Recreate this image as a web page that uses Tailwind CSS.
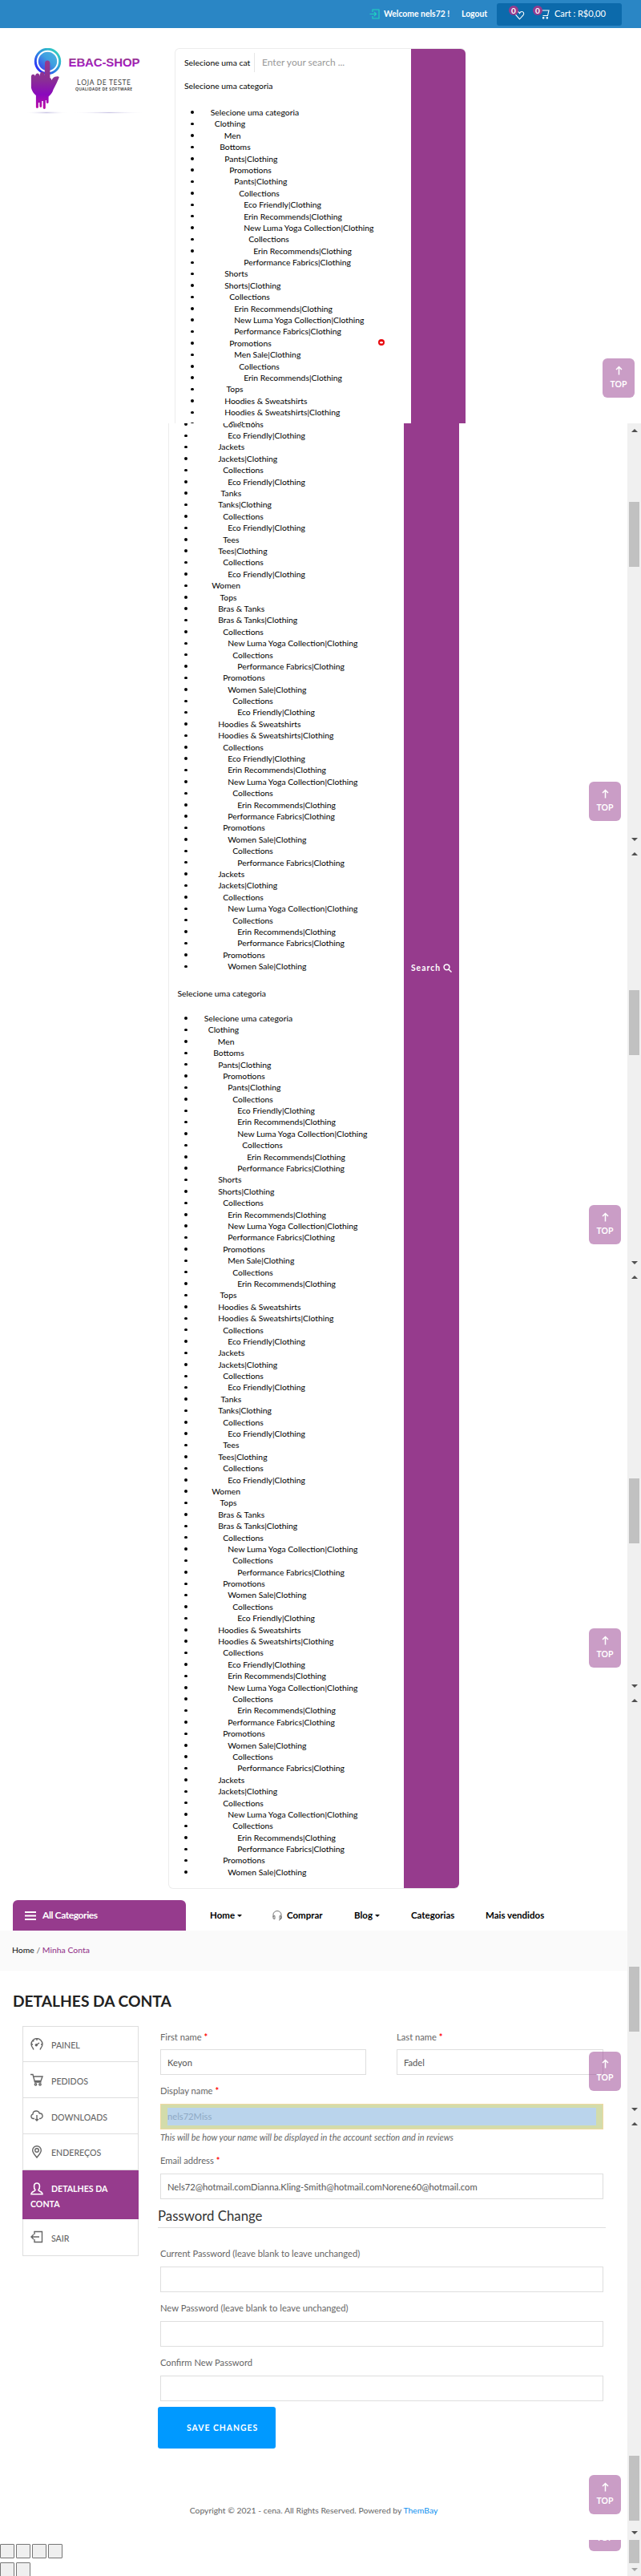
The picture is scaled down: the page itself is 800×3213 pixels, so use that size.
<!DOCTYPE html>
<html lang="pt-BR">
<head>
<meta charset="utf-8">
<title>Minha Conta – EBAC-SHOP</title>
<script src="https://cdn.jsdelivr.net/npm/@tailwindcss/browser@4"></script>
</head>
<body class="w-[800px] h-[3213px] overflow-hidden bg-white font-['Lato',sans-serif] text-[12px] text-[#666]">

<svg width="0" height="0" class="absolute">
  <defs>
    <linearGradient id="ring" x1="0" y1="1" x2="1" y2="0"><stop offset="0" stop-color="#2a10ff"/><stop offset=".5" stop-color="#2f8fe0"/><stop offset="1" stop-color="#35e0b8"/></linearGradient>
    <linearGradient id="disc" x1="0" y1="1" x2="1" y2="0"><stop offset="0" stop-color="#3535ee"/><stop offset=".55" stop-color="#3f9fe0"/><stop offset="1" stop-color="#4cb4e0"/></linearGradient>
    <linearGradient id="hand" x1="0" y1="0" x2="0" y2="1"><stop offset="0" stop-color="#963b8d"/><stop offset=".4" stop-color="#8a2f95"/><stop offset=".7" stop-color="#8a08bd"/><stop offset="1" stop-color="#c010a5"/></linearGradient>
    <linearGradient id="word" x1="0" y1="0" x2="0" y2="1"><stop offset=".2" stop-color="#963b8d"/><stop offset=".8" stop-color="#a314c4"/></linearGradient>
    <radialGradient id="shade"><stop offset="0" stop-color="#c9c4e4"/><stop offset="1" stop-color="#fff" stop-opacity="0"/></radialGradient>
  </defs>
</svg>

<!-- first viewport -->
<div class="relative h-[528px] overflow-hidden">
  <header class="flex h-[35px] items-center bg-[#2a86c5] pl-[461px] text-white">
    <svg class="h-[13px] w-[13px]" viewBox="0 0 13 13" fill="none" stroke="#1fd6c0" stroke-width="1.1"><path d="M4 4V1h8v11H4V9M0.5 6.5H8M6 4l2.5 2.5L6 9"/></svg>
    <span class="ml-[5px] w-[97px] whitespace-nowrap text-[10.4px] font-bold">Welcome nels72 !</span>
    <span class="w-[44px] text-[10.4px] font-bold">Logout</span>
    <div class="relative flex h-[28px] w-[156px] items-center rounded-[3px] bg-[#0c6aab] pl-[22px]">
      <svg class="mt-[2px] h-[12px] w-[13px]" viewBox="0 0 13 12" fill="none" stroke="#fff" stroke-width="1.1"><path d="M6.5 10.8L2 6C.5 4 1.500 1.500 3.800 1.500c1.300 0 2.200.8 2.700 1.900C7 2.300 7.900 1.500 9.200 1.500c2.300 0 3.300 2.500 1.800 4.500z"/></svg>
      <svg class="ml-[20px] h-[12px] w-[11px]" viewBox="0 0 11 12" fill="none" stroke="#fff" stroke-width="1.100"><path d="M0 1h10L8.500 7.500H2.500M10 1L9.300 4"/><circle cx="3.200" cy="10.300" r=".8"/><circle cx="7.800" cy="10.300" r=".8"/></svg>
      <span class="ml-[6px] whitespace-nowrap text-[11.2px] tracking-[-.1px]">Cart : R$0,00</span>
      <span class="absolute left-[15px] top-[3px] flex h-[12px] w-[12px] items-center justify-center rounded-full bg-[#963b8d] text-[10px] font-bold leading-none">0</span>
      <span class="absolute left-[45px] top-[3px] flex h-[12px] w-[12px] items-center justify-center rounded-full bg-[#963b8d] text-[10px] font-bold leading-none">0</span>
    </div>
  </header>

  <div class="flex pt-[25px]">
    <svg class="h-[90px] w-[218px] shrink-0" viewBox="0 60 218 90">
      <ellipse cx="58" cy="140.500" rx="27" ry="2" fill="url(#shade)"/>
      <ellipse cx="136" cy="140.500" rx="46" ry="1.500" fill="url(#shade)"/>
      <circle cx="59.500" cy="76.500" r="15.200" fill="none" stroke="url(#ring)" stroke-width="3"/>
      <circle cx="59.500" cy="76.500" r="11.700" fill="url(#disc)"/>
      <path fill="url(#hand)" d="M56 79q0-3.500 3.200-3.500T62.400 79V97q1.600.5 2 3 1.800-4.500 6-4.600 3.200-.3 3.400 1.200-3.200 8-7.400 15.400-1 4.500-5.800 8.400V128q-1.400 2-2.800 0v-3h-1v10q-1.500 2.200-3 0v-9h-1.600v7q-1.400 1.800-2.800 0v-5h-1.500v6q-1.600 2-3 0V119q-4.600-3.600-6-9.500V95q.6-2.500 2.800-2.200 2 .2 2.200 2.200.5-3.500 3-3.500 2.200 0 2.600 3.500.4-5.500 3.200-5.500 2.600 0 3 4.500z"/>
      <text x="85.500" y="82.700" font-family="Liberation Sans, sans-serif" font-weight="700" font-size="15" textLength="89" fill="url(#word)">EBAC-SHOP</text>
      <text x="96" y="106.300" font-family="Open Sans, sans-serif" font-size="9" textLength="67" fill="#333">LOJA DE TESTE</text>
      <text x="94" y="113" font-family="Open Sans, sans-serif" font-weight="600" font-size="5" textLength="71" fill="#222">QUALIDADE DE SOFTWARE</text>
    </svg>
    <div class="flex h-[500px] w-[363px] rounded-t-[6px] border border-b-0 border-[#ececec] text-black">
      <div class="w-[294px] shrink-0 text-[10.4px]">
        <div class="flex h-[35px] items-center">
          <span class="ml-[11px] w-[83px] whitespace-nowrap">Selecione uma cat</span>
          <span class="ml-[4px] mt-[-1px] flex h-[24px] items-center border-l border-[#e5e5e5] pl-[9px] text-[12px] text-[#999]">Enter your search ...</span>
        </div>
        <div class="ml-[11px] mt-[2px] h-[35px] leading-[18px]">Selecione uma categoria</div>
        <ul id="a" class="leading-[14.400px]"></ul>
      </div>
      <div class="-mr-px flex-1 rounded-tr-[6px] bg-[#963b8d]"></div>
    </div>
  </div>

  <svg class="absolute left-[471px] top-[422px] h-[10px] w-[10px]" viewBox="0 0 10 10"><circle cx="5" cy="5" r="4" fill="#e8090f"/><ellipse cx="5" cy="5.200" rx="2" ry="1.300" fill="#fff"/></svg>
  <div class="absolute left-[752px] top-[447px]" data-top></div>
</div>

<div class="flex">
  <!-- scrolled page -->
  <div class="h-[2685px] w-[783px] shrink-0 overflow-hidden">
    <div class="ml-[210px] flex h-[1828px] w-[363px] rounded-b-[6px] border border-t-0 border-[#ececec] text-[10.4px] text-black">
      <div class="h-[1827px] w-[293px] shrink-0 overflow-hidden">
        <ul id="b" class="mt-[-6.300px] leading-[14.400px]"></ul>
        <div class="ml-[10.500px] flex h-[50.500px] items-center pt-[2px] leading-[14.400px]">Selecione uma categoria</div>
        <ul id="c" class="leading-[14.400px]"></ul>
      </div>
      <div class="-mr-px flex flex-1 items-start justify-center rounded-br-[6px] bg-[#963b8d] pt-[672px] text-white">
        <span class="text-[10.4px] font-bold tracking-[1px]">Search</span>
        <svg class="ml-[3px] mt-[2px] h-[11px] w-[11px]" viewBox="0 0 11 11" fill="none" stroke="#fff" stroke-width="1.500"><circle cx="4.500" cy="4.300" r="3.400"/><path d="M7 7l3.500 3.500"/></svg>
      </div>
    </div>

    <nav class="mt-[14px] flex h-[38px] items-center text-[11.5px] font-medium text-black">
      <div class="ml-[16px] flex h-[38px] w-[216px] items-center rounded-t-[6px] bg-[#963b8d] pl-[15px] font-bold text-white">
        <svg class="mr-[8px] h-[11px] w-[14px]" viewBox="0 0 14 11" fill="#fff"><path d="M0 0h14v2H0zM0 4.500h14v2H0zM0 9h14v2H0z"/></svg>
        <span class="text-[12px] tracking-[-.4px]">All Categories</span>
      </div>
      <div class="ml-[30px] flex w-[78px] items-center font-bold"><span class="w-[34px]">Home</span><i class="border-x-[3px] border-t-[3px] border-x-transparent border-t-black"></i></div>
      <svg class="mr-[6px] h-[13px] w-[12px]" viewBox="0 0 12 13" fill="none" stroke="#666" stroke-width=".9"><path d="M1 8V5a5 4.500 0 0 1 10 0v5l-3 2.300M1 7l2-.5v4L1 10zM11 7l-2-.5v4l2-.5z"/></svg>
      <span class="w-[84px] font-bold">Comprar</span>
      <div class="flex w-[71px] items-center font-bold"><span class="w-[26px]">Blog</span><i class="border-x-[3px] border-t-[3px] border-x-transparent border-t-black"></i></div>
      <span class="w-[93px] font-bold">Categorias</span>
      <span class="font-bold">Mais vendidos</span>
    </nav>
    <div class="flex h-[50px] items-center bg-[#fafafa] pl-[15px] text-[10.4px]"><span class="font-medium text-[#222]">Home</span>&nbsp;/&nbsp;<span class="font-medium text-[#963b8d]">Minha Conta</span></div>
    <h1 class="ml-[16px] mt-[25px] h-[44px] text-[19.2px] font-bold leading-[26px] text-[#222]">DETALHES DA CONTA</h1>

    <div class="flex h-[641px]">
      <ul class="ml-[28px] h-[287px] w-[145px] border border-[#dedede] text-[10.6px] text-[#666]">
        <li class="flex h-[44px] items-center border-b border-[#dedede] pl-[9px]">
          <svg class="h-[16px] w-[16px]" viewBox="0 0 16 16" fill="none" stroke="#666" stroke-width="1.400"><path d="M4 14.500L3 12.500A7 7 0 1 1 13 12.500l-1 2M7 9l4-3M8 1v2M1 8h2M3 3l1.300 1.300M13 8h2"/><circle cx="7.300" cy="8.700" r="1"/></svg>
          <span class="ml-[10px] mt-[5px] font-medium">PAINEL</span></li>
        <li class="flex h-[45px] items-center border-b border-[#dedede] pl-[9px]">
          <svg class="h-[16px] w-[16px]" viewBox="0 0 16 16" fill="none" stroke="#666" stroke-width="1.400"><path d="M0 1.500h3L5.500 11h8M3.500 4H15l-2 5.500H5.500"/><circle cx="6.500" cy="13.800" r="1.200"/><circle cx="12" cy="13.800" r="1.200"/></svg>
          <span class="ml-[10px] mt-[5px] font-medium">PEDIDOS</span></li>
        <li class="flex h-[45px] items-center border-b border-[#dedede] pl-[9px]">
          <svg class="h-[16px] w-[16px]" viewBox="0 0 16 16" fill="none" stroke="#666" stroke-width="1.400"><path d="M5 11.500H3.500A2.800 2.800 0 0 1 3 6C3 3.500 5 2 7.300 2c2 0 3.500 1.200 4 3a3.200 3.200 0 0 1 1 6.500H11M8 7v7M6 12l2 2 2-2"/></svg>
          <span class="ml-[10px] mt-[5px] font-medium">DOWNLOADS</span></li>
        <li class="flex h-[45px] items-center border-b border-[#dedede] pl-[9px]">
          <svg class="h-[16px] w-[16px]" viewBox="0 0 16 16" fill="none" stroke="#666" stroke-width="1.400"><path d="M8 15C6 12 2.700 9.500 2.700 6a5.300 5.300 0 0 1 10.600 0c0 3.500-3.300 6-5.300 9z"/><circle cx="8" cy="6" r="2.300"/></svg>
          <span class="ml-[10px] mt-[4px] font-medium">ENDEREÇOS</span></li>
        <li class="-mx-px h-[61px] bg-[#963b8d] pl-[10px] pt-[13px] font-bold text-white">
          <div class="flex h-[19px] items-center">
          <svg class="h-[16px] w-[16px]" viewBox="0 0 16 16" fill="none" stroke="#fff" stroke-width="1.600"><path d="M6 9.500C4 7.500 3.500 1 8 1s4 6.500 2 8.500c0 2 5 1.500 5 5.300H1c0-3.800 5-3.300 5-5.300z"/></svg>
          <span class="ml-[10px] mt-[2px]">DETALHES DA</span></div>
          <div class="mt-[2px] leading-[16px]">CONTA</div></li>
        <li class="flex h-[44px] items-center pl-[9px]">
          <svg class="h-[16px] w-[16px]" viewBox="0 0 16 16" fill="none" stroke="#666" stroke-width="1.400"><path d="M5 5V1.500h9.500v13H5V11M11 8H1M4 5L1 8l3 3"/></svg>
          <span class="ml-[10px] mt-[5px] font-medium">SAIR</span></li>
      </ul>

      <form class="ml-[27px] w-[553px] pt-[5px] text-[11.2px] leading-[18px] [&_input]:block [&_input]:h-[32px] [&_input]:w-full [&_input]:border [&_input]:border-[#dedede] [&_input]:px-[8px] [&_input]:text-[#555] [&_label]:block [&_b]:text-[#f00]">
        <div class="flex gap-[38px]">
          <div class="w-[257px]"><label class="h-[24px]">First name <b>*</b></label><input value="Keyon"></div>
          <div class="w-[258px]"><label class="h-[24px]">Last name <b>*</b></label><input value="Fadel"></div>
        </div>
        <label class="mt-[11px] h-[25px]">Display name <b>*</b></label>
        <div class="h-[32px] border border-[#f0d9a0] bg-[#d3dcab] px-[8px] py-[4px]"><div class="h-[22px] bg-[#bad4ec] leading-[22px] text-[#8fa9c4]">nels72Miss</div></div>
        <em class="block h-[28px] text-[10.9px] leading-[20px]">This will be how your name will be displayed in the account section and in reviews</em>
        <label class="h-[27px] pt-[2px]">Email address <b>*</b></label>
        <input value="Nels72@hotmail.comDianna.Kling-Smith@hotmail.comNorene60@hotmail.com">
        <div class="-ml-[3px] mt-[8px] h-[28px] w-[559px] border-b border-[#dedede] text-[16.8px] leading-[26px] text-[#333]">Password Change</div>
        <label class="mt-[23px] h-[25px]">Current Password (leave blank to leave unchanged)</label><input>
        <label class="mt-[11px] h-[25px]">New Password (leave blank to leave unchanged)</label><input>
        <label class="mt-[11px] h-[25px]">Confirm New Password</label><input>
        <button type="button" class="-ml-[3px] mt-[7px] block h-[52px] w-[147px] rounded-[3px] bg-[#0099ff] pl-[36px] text-left text-[10.4px] font-bold tracking-[1px] text-white">SAVE CHANGES</button>
      </form>
    </div>

    <footer>
      <div class="mt-[-45px] text-center text-[10.4px] leading-[16px]">Copyright © 2021 - cena. All Rights Reserved. Powered by <span class="text-[#0c8ff0]">ThemBay</span></div>
      <div class="mt-[34px] flex gap-[2px] [&>i]:h-[18px] [&>i]:w-[18px] [&>i]:rounded-[1px] [&>i]:border [&>i]:border-[#767676] [&>i]:bg-[#efefef]"><i></i><i></i><i></i><i></i></div>
      <div class="mt-[5px] flex gap-[2px] [&>i]:h-[18px] [&>i]:w-[18px] [&>i]:rounded-[1px] [&>i]:border [&>i]:border-[#767676] [&>i]:bg-[#efefef]"><i></i><i></i></div>
    </footer>
  </div>

  <!-- scrollbar tracks with the floating TOP button of each viewport -->
  <div id="tracks" class="w-[17px] shrink-0 bg-[#f0f0f0]"></div>
</div>

<script>
const top_ = '<div class="flex h-[49px] w-[40px] flex-col items-center rounded-[6px] bg-[#963b8d]/50 pt-[9px] text-white"><svg class="h-[12px] w-[9px]" viewBox="0 0 9 12" fill="none" stroke="#fff" stroke-width="1.500"><path d="M4.500 11.500V1.500M1 5l3.500-3.500L8 5"/></svg><span class="mt-[4px] text-[10.4px] font-bold leading-[14px]">TOP</span></div>';
document.querySelector('[data-top]').innerHTML = top_;
const up = '<i class="mx-auto block w-0 border-x-[4px] border-b-[4px] border-x-transparent border-b-[#505050]"></i>';
const down = '<i class="mx-auto block w-0 border-x-[4px] border-t-[4px] border-x-transparent border-t-[#505050]"></i>';
document.getElementById('tracks').innerHTML = [98, 179, 260, 341, 423].map(y =>
  `<div class="relative flex h-[528px] flex-col pt-[7px]">${up}<div class="ml-[2px] h-[81px] w-[13px] bg-[#c1c1c1]" style="margin-top:${y - 11}px"></div><div class="mb-[7px] mt-auto">${down}</div><div class="absolute -left-[48px] top-[447px]">${top_}</div></div>`).join('') +
  `<div class="relative h-[45px]"><div class="ml-[2px] h-[29px] w-[13px] bg-[#c1c1c1]"></div><i class="mx-auto mt-[6px] block w-0 border-x-[4px] border-t-[4px] border-x-transparent border-t-[#a3a3a3]"></i><div class="absolute -left-[48px] top-0 flex h-[14px] items-end overflow-hidden">${top_}</div></div>`;

// Category tree: horizontal start (px inside the panel) and label
const P = 'Performance Fabrics|Clothing', N = 'New Luma Yoga Collection|Clothing', R = 'Erin Recommends|Clothing',
      E = 'Eco Friendly|Clothing', C = 'Collections', M = 'Promotions', W = 'Women Sale|Clothing', H = 'Hoodies & Sweatshirts';
const L = n => 60 + 6 * n;
const rows = [[42.500,'Selecione uma categoria'],[47.500,'Clothing'],[59.500,'Men'],[L(-1),'Bottoms'],[L(0),'Pants|Clothing'],[L(1),M],[L(2),'Pants|Clothing'],[L(3),C],[L(4),E],[L(4),R],[L(4),N],[L(5),C],[L(6),R],[L(4),P],
 [L(0),'Shorts'],[L(0),'Shorts|Clothing'],[L(1),C],[L(2),R],[L(2),N],[L(2),P],[L(1),M],[L(2),'Men Sale|Clothing'],[L(3),C],[L(4),R],
 [62.300,'Tops'],[L(0),H],[L(0),H+'|Clothing'],[L(1),C],[L(2),E],[L(0),'Jackets'],[L(0),'Jackets|Clothing'],[L(1),C],[L(2),E],
 [63.400,'Tanks'],[L(0),'Tanks|Clothing'],[L(1),C],[L(2),E],[66,'Tees'],[L(0),'Tees|Clothing'],[L(1),C],[L(2),E],
 [52,'Women'],[62.300,'Tops'],[L(0),'Bras & Tanks'],[L(0),'Bras & Tanks|Clothing'],[L(1),C],[L(2),N],[L(3),C],[L(4),P],[L(1),M],[L(2),W],[L(3),C],[L(4),E],
 [L(0),H],[L(0),H+'|Clothing'],[L(1),C],[L(2),E],[L(2),R],[L(2),N],[L(3),C],[L(4),R],[L(2),P],[L(1),M],[L(2),W],[L(3),C],[L(4),P],
 [L(0),'Jackets'],[L(0),'Jackets|Clothing'],[L(1),C],[L(2),N],[L(3),C],[L(4),R],[L(4),P],[L(1),M],[L(2),W]];
const fill = (id, list) => document.getElementById(id).innerHTML = list.map(([x, t]) =>
  `<li class="flex h-[14.400px] items-center whitespace-nowrap pl-[19px]"><i class="h-[3.500px] w-[3.500px] shrink-0 rounded-full bg-black"></i><span style="margin-left:${x - 21.3}px">${t.replace('&', '&amp;')}</span></li>`).join('');
fill('a', rows.slice(0, 28));
fill('b', rows.slice(27));
fill('c', rows);
</script>
</body>
</html>
